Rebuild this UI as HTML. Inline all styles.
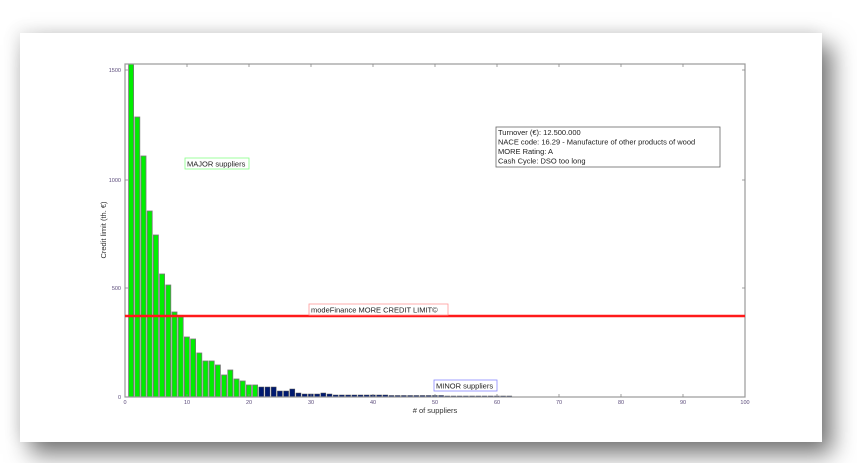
<!DOCTYPE html>
<html><head><meta charset="utf-8"><style>
html,body{margin:0;padding:0;width:857px;height:463px;overflow:hidden;background:#fff;}
.card{position:absolute;left:20px;top:33px;width:802px;height:409px;background:#fff;box-shadow:10px 12px 22px rgba(0,0,0,0.55),-4px -4px 14px rgba(0,0,0,0.08);}
svg{position:absolute;left:0;top:0;}
text{font-family:"Liberation Sans",sans-serif;}
</style></head><body>
<div class="card"></div>
<svg width="857" height="463" viewBox="0 0 857 463">
<g fill="#00ee00" stroke="#777" stroke-width="0.8">
<rect x="128.6" y="64" width="5" height="333"/>
<rect x="134.8" y="117" width="5" height="280"/>
<rect x="141" y="156" width="5" height="241"/>
<rect x="147.2" y="211" width="5" height="186"/>
<rect x="153.4" y="235" width="5" height="162"/>
<rect x="159.6" y="274" width="5" height="123"/>
<rect x="165.8" y="285" width="5" height="112"/>
<rect x="172" y="312" width="5" height="85"/>
<rect x="178.2" y="317" width="5" height="80"/>
<rect x="184.4" y="337" width="5" height="60"/>
<rect x="190.6" y="339" width="5" height="58"/>
<rect x="196.8" y="353" width="5" height="44"/>
<rect x="203" y="361" width="5" height="36"/>
<rect x="209.2" y="361" width="5" height="36"/>
<rect x="215.4" y="365" width="5" height="32"/>
<rect x="221.6" y="375" width="5" height="22"/>
<rect x="227.8" y="370" width="5" height="27"/>
<rect x="234" y="379" width="5" height="18"/>
<rect x="240.2" y="381" width="5" height="16"/>
<rect x="246.4" y="385" width="5" height="12"/>
<rect x="252.6" y="385" width="5" height="12"/>
</g>
<g fill="#001a70" stroke="#555" stroke-width="0.5">
<rect x="258.8" y="387" width="5" height="10"/>
<rect x="265" y="387" width="5" height="10"/>
<rect x="271.2" y="387" width="5" height="10"/>
<rect x="277.4" y="391" width="5" height="6"/>
<rect x="283.6" y="391" width="5" height="6"/>
<rect x="289.8" y="389" width="5" height="8"/>
<rect x="296" y="393" width="5" height="4"/>
<rect x="302.2" y="394" width="5" height="3"/>
<rect x="308.4" y="394" width="5" height="3"/>
<rect x="314.6" y="394" width="5" height="3"/>
<rect x="320.8" y="393" width="5" height="4"/>
<rect x="327" y="394" width="5" height="3"/>
<rect x="333.2" y="395" width="5" height="2"/>
<rect x="339.4" y="395" width="5" height="2"/>
<rect x="345.6" y="395" width="5" height="2"/>
<rect x="351.8" y="395" width="5" height="2"/>
<rect x="358" y="395" width="5" height="2"/>
<rect x="364.2" y="395" width="5" height="2"/>
<rect x="370.4" y="395" width="5" height="2"/>
<rect x="376.6" y="395" width="5" height="2"/>
<rect x="382.8" y="395" width="5" height="2"/>
<rect x="389" y="395.5" width="5" height="1.5"/>
<rect x="395.2" y="395.5" width="5" height="1.5"/>
<rect x="401.4" y="395.5" width="5" height="1.5"/>
<rect x="407.6" y="395.5" width="5" height="1.5"/>
<rect x="413.8" y="395.5" width="5" height="1.5"/>
<rect x="420" y="395.5" width="5" height="1.5"/>
<rect x="426.2" y="395.5" width="5" height="1.5"/>
<rect x="432.4" y="395.5" width="5" height="1.5"/>
<rect x="438.6" y="395.5" width="5" height="1.5"/>
<rect x="444.8" y="396" width="5" height="1"/>
<rect x="451" y="396" width="5" height="1"/>
<rect x="457.2" y="396" width="5" height="1"/>
<rect x="463.4" y="396" width="5" height="1"/>
<rect x="469.6" y="396" width="5" height="1"/>
<rect x="475.8" y="396" width="5" height="1"/>
<rect x="482" y="396" width="5" height="1"/>
<rect x="488.2" y="396" width="5" height="1"/>
<rect x="494.4" y="396" width="5" height="1"/>
<rect x="500.6" y="396" width="5" height="1"/>
<rect x="506.8" y="396" width="5" height="1"/>
</g>
<rect x="125" y="64" width="620" height="333" fill="none" stroke="#999" stroke-width="1.2"/>
<g stroke="#888" stroke-width="0.8">
<line x1="187" y1="397" x2="187" y2="394"/><line x1="249" y1="397" x2="249" y2="394"/><line x1="311" y1="397" x2="311" y2="394"/><line x1="373" y1="397" x2="373" y2="394"/><line x1="435" y1="397" x2="435" y2="394"/><line x1="497" y1="397" x2="497" y2="394"/><line x1="559" y1="397" x2="559" y2="394"/><line x1="621" y1="397" x2="621" y2="394"/><line x1="683" y1="397" x2="683" y2="394"/>
<line x1="187" y1="64" x2="187" y2="67"/><line x1="249" y1="64" x2="249" y2="67"/><line x1="311" y1="64" x2="311" y2="67"/><line x1="373" y1="64" x2="373" y2="67"/><line x1="435" y1="64" x2="435" y2="67"/><line x1="497" y1="64" x2="497" y2="67"/><line x1="559" y1="64" x2="559" y2="67"/><line x1="621" y1="64" x2="621" y2="67"/><line x1="683" y1="64" x2="683" y2="67"/>
<line x1="125" y1="288" x2="128" y2="288"/><line x1="125" y1="180" x2="128" y2="180"/><line x1="125" y1="70" x2="128" y2="70"/>
<line x1="745" y1="288" x2="742" y2="288"/><line x1="745" y1="180" x2="742" y2="180"/><line x1="745" y1="70" x2="742" y2="70"/>
</g>
<g font-size="5.5" fill="#5a4a7a" text-anchor="end">
<text x="121" y="72">1500</text><text x="121" y="182">1000</text><text x="121" y="290">500</text><text x="121" y="399">0</text>
</g>
<g font-size="5.5" fill="#5a4a7a" text-anchor="middle">
<text x="125" y="404">0</text><text x="187" y="404">10</text><text x="249" y="404">20</text><text x="311" y="404">30</text><text x="373" y="404">40</text><text x="435" y="404">50</text><text x="497" y="404">60</text><text x="559" y="404">70</text><text x="621" y="404">80</text><text x="683" y="404">90</text><text x="745" y="404">100</text>
</g>
<text x="435" y="413" font-size="7.5" fill="#333" text-anchor="middle"># of suppliers</text>
<text transform="translate(106,230) rotate(-90)" font-size="7.5" fill="#333" text-anchor="middle">Credit limit (th. €)</text>
<line x1="125" y1="316" x2="745" y2="316" stroke="#ff1a1a" stroke-width="2.5"/>
<rect x="185" y="158" width="64" height="11" fill="#fff" stroke="#8f8" stroke-width="0.8"/>
<text x="187" y="166.5" font-size="7.5" fill="#222">MAJOR suppliers</text>
<rect x="309" y="304" width="139" height="11" fill="#fff" stroke="#f99" stroke-width="0.8"/>
<text x="311" y="312.5" font-size="7.5" fill="#222">modeFinance MORE CREDIT LIMIT©</text>
<rect x="434" y="380" width="63" height="11" fill="#fff" stroke="#88f" stroke-width="0.8"/>
<text x="436" y="388.5" font-size="7.5" fill="#222">MINOR suppliers</text>
<rect x="496" y="127" width="224" height="40" fill="#fff" stroke="#666" stroke-width="0.8"/>
<g font-size="7.5" fill="#222">
<text x="498" y="135">Turnover (€): 12.500.000</text>
<text x="498" y="144.5">NACE code: 16.29 - Manufacture of other products of wood</text>
<text x="498" y="154">MORE Rating: A</text>
<text x="498" y="163.5">Cash Cycle: DSO too long</text>
</g>
</svg>
</body></html>
